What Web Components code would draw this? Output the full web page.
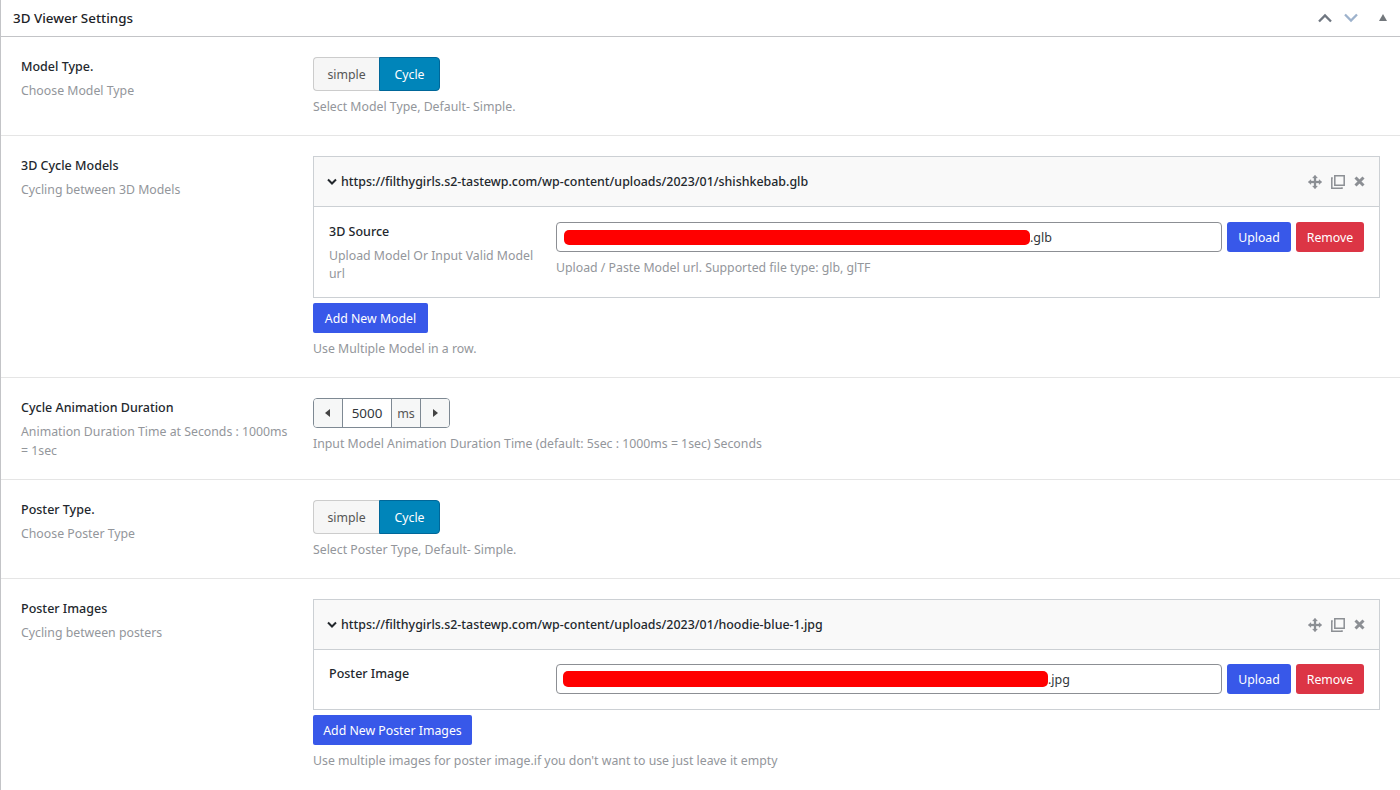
<!DOCTYPE html>
<html lang="en">
<head>
<meta charset="utf-8">
<title>3D Viewer Settings</title>
<style>
  html, body { margin: 0; background: #fff; }
  body {
    height: 790px;
    overflow: hidden;
    font-family: "Noto Sans", "Open Sans", sans-serif;
    font-size: 13px;
    color: #23282d;
  }
</style>
</head>
<body>
<settings-panel heading="3D Viewer Settings">
  <field-row label="Model Type." desc="Choose Model Type" style="height:99px">
    <button-set active="Cycle" options="simple,Cycle"></button-set>
    <help-text>Select Model Type, Default- Simple.</help-text>
  </field-row>

  <field-row label="3D Cycle Models" desc="Cycling between 3D Models" style="height:242px">
    <repeat-group title="https://filthygirls.s2-tastewp.com/wp-content/uploads/2023/01/shishkebab.glb">
      <upload-field label="3D Source" desc="Upload Model Or Input Valid Model url" ext=".glb" scribble="466" help="Upload / Paste Model url. Supported file type: glb, glTF"></upload-field>
    </repeat-group>
    <add-button style="width:115px">Add New Model</add-button>
    <help-text>Use Multiple Model in a row.</help-text>
  </field-row>

  <field-row label="Cycle Animation Duration" desc="Animation Duration Time at Seconds : 1000ms = 1sec" style="height:102px">
    <number-stepper value="5000" unit="ms"></number-stepper>
    <help-text>Input Model Animation Duration Time (default: 5sec : 1000ms = 1sec) Seconds</help-text>
  </field-row>

  <field-row label="Poster Type." desc="Choose Poster Type" style="height:99px">
    <button-set active="Cycle" options="simple,Cycle"></button-set>
    <help-text>Select Poster Type, Default- Simple.</help-text>
  </field-row>

  <field-row label="Poster Images" desc="Cycling between posters" last>
    <repeat-group title="https://filthygirls.s2-tastewp.com/wp-content/uploads/2023/01/hoodie-blue-1.jpg">
      <upload-field label="Poster Image" ext=".jpg" scribble="485" inset="6" thick="16" style="padding-top:14px;padding-bottom:15px"></upload-field>
    </repeat-group>
    <add-button style="width:159px">Add New Poster Images</add-button>
    <help-text>Use multiple images for poster image.if you don't want to use just leave it empty</help-text>
  </field-row>
</settings-panel>

<script>
class SettingsPanel extends HTMLElement {
  constructor() {
    super();
    this.attachShadow({ mode: "open" });
  }

  connectedCallback() {
    this.shadowRoot.innerHTML = `
    <style>
      :host { display: block; min-height: 790px; box-sizing: border-box; border-left: 1px solid #c3c4c7; }
      .head {
        height: 36px;
        border-bottom: 1px solid #c3c4c7;
        display: flex;
        align-items: center;
        padding-left: 12px;
      }
      h2 { margin: 0; font-size: 13.400px; font-weight: 500; color: #1d2327; flex: 1; }
      .tools { display: flex; align-items: center; }
      svg { display: block; }
    </style>
    <div class="head">
      <h2>${this.getAttribute("heading")}</h2>
      <div class="tools">
        <svg width="16" height="10" viewBox="0 0 16 10" style="margin-right:10px"><path d="M2 8.500l6-6 6 6" fill="none" stroke="#6f7680" stroke-width="2.300"/></svg>
        <svg width="16" height="10" viewBox="0 0 16 10" style="margin-right:20px"><path d="M2 1.500l6 6 6-6" fill="none" stroke="#9db2cc" stroke-width="2.300"/></svg>
        <svg width="8" height="8" viewBox="0 0 8 8" style="margin-right:13px"><path d="M4 0l4 7H0z" fill="#72777c"/></svg>
      </div>
    </div>
    <slot></slot>`;
  }
}

class FieldRow extends HTMLElement {
  constructor() {
    super();
    this.attachShadow({ mode: "open" });
  }

  connectedCallback() {
    this.shadowRoot.innerHTML = `
    <style>
      :host {
        display: grid;
        grid-template-columns: 292px 1067px;
        box-sizing: border-box;
        padding: 20px 0 0 20px;
        border-bottom: 1px solid #e5e5e5;
      }
      :host([last]) { border-bottom: 0; }
      .label { font-size: 12.500px; font-weight: 500; color: #23282d; line-height: 18px; margin-top: 1px; }
      .desc { font-size: 12.300px; color: #93969b; line-height: 19px; margin-top: 5px; width: 275px; }
      .body { display: flex; flex-direction: column; align-items: flex-start; min-width: 0; }
    </style>
    <div class="side">
      <div class="label">${this.getAttribute("label")}</div>
      <div class="desc">${this.getAttribute("desc")}</div>
    </div>
    <div class="body"><slot></slot></div>`;
  }
}

class ButtonSet extends HTMLElement {
  constructor() {
    super();
    this.attachShadow({ mode: "open" });
  }

  connectedCallback() {
    const active = this.getAttribute("active");
    const items = this.getAttribute("options").split(",").map((o) =>
      `<span class="${o === active ? "on" : ""}">${o}</span>`).join("");
    this.shadowRoot.innerHTML = `
    <style>
      :host { display: inline-flex; height: 34px; }
      span {
        box-sizing: border-box;
        width: 66px;
        display: flex;
        align-items: center;
        justify-content: center;
        background: #f6f6f6;
        border: 1px solid #ccc;
        border-right: 0;
        border-radius: 4px 0 0 4px;
        font-size: 12.300px;
        color: #555;
      }
      span.on {
        width: 61px;
        background: #0085ba;
        border: 1px solid #006799;
        border-radius: 0 4px 4px 0;
        color: #fff;
      }
    </style>
    ${items}`;
  }
}

class HelpText extends HTMLElement {
  constructor() {
    super();
    this.attachShadow({ mode: "open" });
  }

  connectedCallback() {
    this.shadowRoot.innerHTML = `
    <style>
      :host { display: block; font-size: 12.300px; color: #93969b; line-height: 18px; margin-top: 7px; }
    </style>
    <slot></slot>`;
  }
}

class RepeatGroup extends HTMLElement {
  constructor() {
    super();
    this.attachShadow({ mode: "open" });
  }

  connectedCallback() {
    this.shadowRoot.innerHTML = `
    <style>
      :host { display: block; width: 1067px; box-sizing: border-box; border: 1px solid #ccd0d4; }
      .top {
        box-sizing: border-box;
        height: 50px;
        background: #f9f9f9;
        border-bottom: 1px solid #ccd0d4;
        display: flex;
        align-items: center;
        padding: 0 14px 0 13px;
        font-size: 12.420px;
        font-weight: 500;
        color: #23282d;
      }
      .title { flex: 1; margin-left: 4px; }
      .tools { display: flex; align-items: center; gap: 9px; }
      svg { display: block; }
    </style>
    <div class="top">
      <svg width="10" height="8" viewBox="0 0 10 8"><path d="M1 1.500l4 4 4-4" fill="none" stroke="#23282d" stroke-width="2"/></svg>
      <span class="title">${this.getAttribute("title")}</span>
      <div class="tools">
        <svg width="14" height="14" viewBox="0 0 14 14" fill="#8c8f94" stroke="#8c8f94" stroke-width=".3"><path d="M6 3h2v3h3V4.500L14 7l-3 2.500V8H8v3h1.500L7 14l-2.500-3H6V8H3v1.500L0 7l3-2.500V6h3V3H4.500L7 0l2.500 3H8z"/></svg>
        <svg width="14" height="14" viewBox="0 0 14 14" fill="none" stroke="#8c8f94" stroke-width="1.500"><path d="M3.800.8h9.400v9.400H3.800z"/><path d="M1.800 3H.8v10.200H11V12.200"/></svg>
        <svg width="11" height="11" viewBox="0 0 11 11"><path d="M1.500 1.500l8 8m0-8l-8 8" fill="none" stroke="#8c8f94" stroke-width="3"/></svg>
      </div>
    </div>
    <slot></slot>`;
  }
}

class UploadField extends HTMLElement {
  constructor() {
    super();
    this.attachShadow({ mode: "open" });
  }

  connectedCallback() {
    const desc = this.getAttribute("desc");
    const help = this.getAttribute("help");
    const inset = this.getAttribute("inset") || 7;
    const thick = this.getAttribute("thick") || 15;
    this.shadowRoot.innerHTML = `
    <style>
      :host {
        display: grid;
        grid-template-columns: 227px 1fr;
        padding: 15px 15px 14px 15px;
      }
      .label { font-size: 12.500px; font-weight: 500; color: #23282d; line-height: 18px; margin-top: 1px; }
      .desc { font-size: 12.300px; color: #93969b; line-height: 18px; margin-top: 6px; width: 215px; }
      .line { display: flex; gap: 5px; }
      .input {
        box-sizing: border-box;
        width: 666px;
        flex: none;
        height: 30px;
        border: 1px solid #8c8f94;
        border-radius: 4px;
        display: flex;
        align-items: center;
        padding-left: ${inset}px;
        font-size: 12.500px;
        color: #32373c;
      }
      .mark { height: ${thick}px; width: ${this.getAttribute("scribble")}px; background: #f00; border-radius: 5px; }
      .btn {
        box-sizing: border-box;
        height: 30px;
        border-radius: 3px;
        display: flex;
        align-items: center;
        justify-content: center;
        color: #fff;
        font-size: 12.300px;
      }
      .up { width: 64px; background: #3858e9; }
      .rm { width: 68px; background: #dc3545; }
      .help { font-size: 12.300px; color: #93969b; line-height: 18px; margin-top: 7px; }
    </style>
    <div>
      <div class="label">${this.getAttribute("label")}</div>
      ${desc ? `<div class="desc">${desc}</div>` : ""}
    </div>
    <div>
      <div class="line">
        <div class="input"><span class="mark"></span><span>${this.getAttribute("ext")}</span></div>
        <div class="btn up">Upload</div>
        <div class="btn rm">Remove</div>
      </div>
      ${help ? `<div class="help">${help}</div>` : ""}
    </div>`;
  }
}

class AddButton extends HTMLElement {
  constructor() {
    super();
    this.attachShadow({ mode: "open" });
  }

  connectedCallback() {
    this.shadowRoot.innerHTML = `
    <style>
      :host {
        display: inline-flex;
        align-items: center;
        justify-content: center;
        height: 30px;
        margin-top: 5px;
        background: #3858e9;
        border-radius: 2px;
        color: #fff;
        font-size: 12.300px;
      }
    </style>
    <slot></slot>`;
  }
}

class NumberStepper extends HTMLElement {
  constructor() {
    super();
    this.attachShadow({ mode: "open" });
  }

  connectedCallback() {
    this.shadowRoot.innerHTML = `
    <style>
      :host {
        display: inline-flex;
        height: 30px;
        box-sizing: border-box;
        border: 1px solid #7e8993;
        border-radius: 4px;
        font-size: 12.500px;
        color: #32373c;
        overflow: hidden;
      }
      div { display: flex; align-items: center; justify-content: center; background: #f6f7f7; border-right: 1px solid #7e8993; }
      div:last-child { border-right: 0; }
      .arrow { width: 28px; }
      .val { width: 48px; background: #fff; font-size: 13.400px; }
      .unit { width: 28px; color: #555; }
      svg { display: block; }
    </style>
    <div class="arrow"><svg width="6" height="8" viewBox="0 0 6 8"><path d="M5 0v8L0 4z" fill="#444"/></svg></div>
    <div class="val">${this.getAttribute("value")}</div>
    <div class="unit">${this.getAttribute("unit")}</div>
    <div class="arrow"><svg width="6" height="8" viewBox="0 0 6 8"><path d="M1 0v8l5-4z" fill="#444"/></svg></div>`;
  }
}

customElements.define("settings-panel", SettingsPanel);
customElements.define("field-row", FieldRow);
customElements.define("button-set", ButtonSet);
customElements.define("help-text", HelpText);
customElements.define("repeat-group", RepeatGroup);
customElements.define("upload-field", UploadField);
customElements.define("add-button", AddButton);
customElements.define("number-stepper", NumberStepper);
</script>
</body>
</html>
